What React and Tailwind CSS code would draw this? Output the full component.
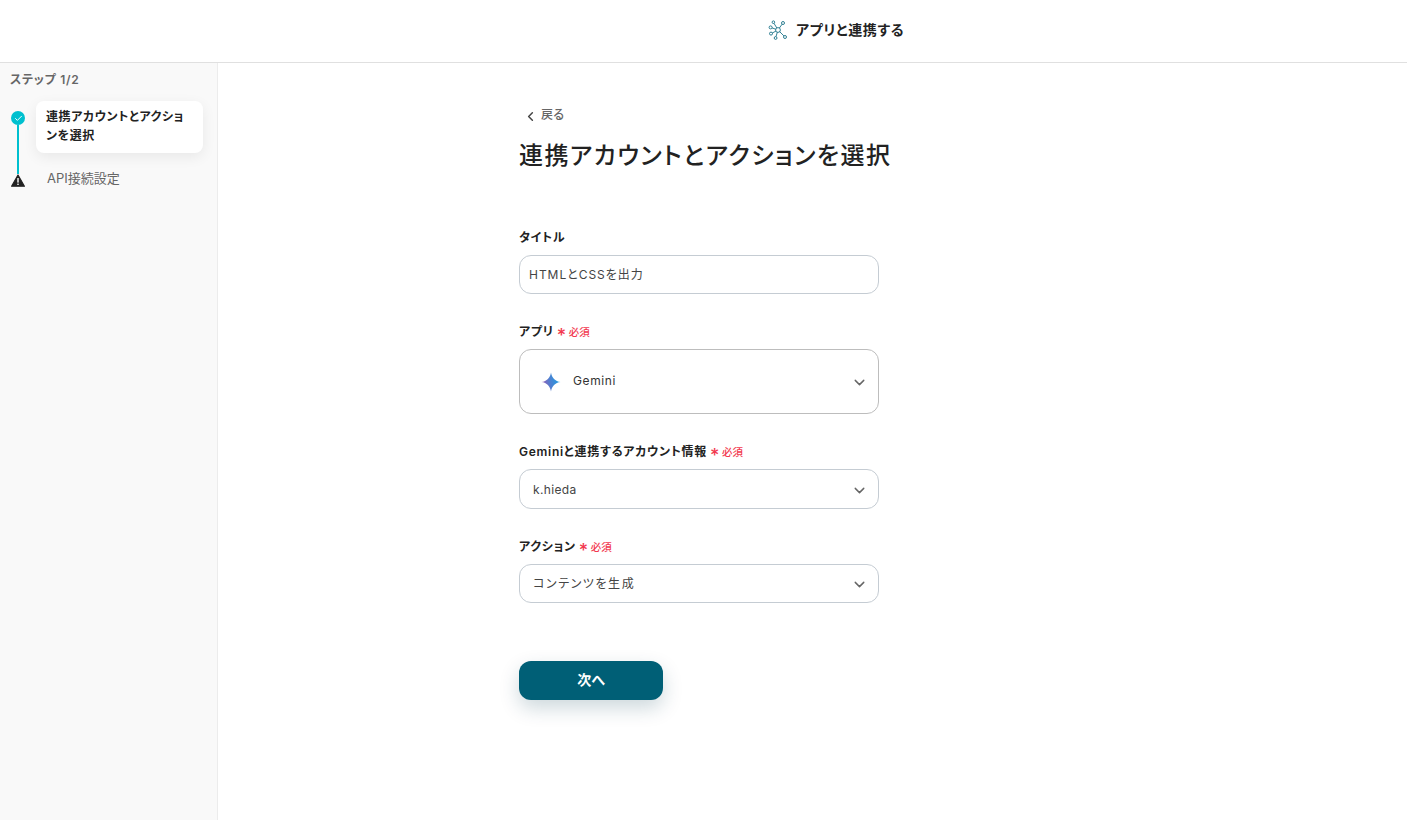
import { ChevronDown, ChevronLeft, Check } from "lucide-react";

const FONT = "font-['Inter','Noto_Sans_CJK_JP',sans-serif] [font-feature-settings:'palt']";

/* ICONS */

function LinkIcon() {
  return (
    <svg width="20" height="20" viewBox="0 0 20 20" fill="none" stroke="#00627a" strokeWidth="0.8">
      <circle cx="10" cy="10" r="2.4" />
      <circle cx="2.6" cy="7.4" r="1.5" />
      <circle cx="3" cy="13.6" r="1.5" />
      <circle cx="7.6" cy="18" r="1.4" />
      <circle cx="17" cy="17" r="1.5" />
      <circle cx="15" cy="3" r="1.5" />
      <circle cx="5.4" cy="2.2" r="1.3" />
      <path d="M7.7 9.2 4 7.9M7.9 11.1 4.3 13M9.3 12.3 8 16.6M11.7 11.7 15.9 15.9M11.4 8 14.1 4.2M8.8 7.9 6 3.4" />
    </svg>
  );
}

function GeminiIcon() {
  return (
    <svg width="20" height="20" viewBox="0 0 20 20">
      <defs>
        <linearGradient id="gem" x1="0" y1="0.6" x2="1" y2="0.4">
          <stop offset="0.1" stopColor="#8a62b8" />
          <stop offset="0.45" stopColor="#4f7fd0" />
          <stop offset="1" stopColor="#1ba1e3" />
        </linearGradient>
      </defs>
      <path d="M10 0.5C10.6 5.6 14.4 9.4 19.5 10C14.4 10.6 10.6 14.4 10 19.5C9.4 14.4 5.6 10.6 0.5 10C5.6 9.4 9.4 5.6 10 0.5Z" fill="url(#gem)" />
    </svg>
  );
}

function WarnIcon() {
  return (
    <svg width="14" height="13" viewBox="0 0 14 13" className="block">
      <path d="M7 1 13.4 12.2H0.6Z" fill="#222" stroke="#222" strokeWidth="1.2" strokeLinejoin="round" />
      <rect x="6.3" y="4" width="1.4" height="4.6" fill="#fff" />
      <rect x="6.3" y="9.6" width="1.4" height="1.4" fill="#fff" />
    </svg>
  );
}

/* FORM PARTS */

function Label({ children, required }) {
  return (
    <div className="flex items-center h-5 text-xs tracking-[0.06em] font-semibold text-[#222]">
      {children}
      {required && (
        <span className="flex items-center ml-[3px] pt-[1px] text-[10.5px] tracking-normal font-medium text-[#f2394f]">
          <span className="w-[9px] text-center text-[18px] font-medium leading-none mt-[6px] mr-[3px]">*</span>
          必須
        </span>
      )}
    </div>
  );
}

function Select({ children, height, border = "border-[#c5ccd3]" }) {
  return (
    <div className={`flex items-center justify-between border rounded-xl bg-white pr-[10px] ${border} ${height}`}>
      {children}
      <ChevronDown size={17} strokeWidth={2} className="text-[#666] mt-[2px]" />
    </div>
  );
}

export default function App() {
  return (
    <div className={`${FONT} h-[820px] flex flex-col bg-white overflow-hidden`}>

      {/* Header */}
      <header className="h-[63px] shrink-0 border-b border-[#e0e0e0] flex items-center pl-[768px] pb-[2px]">
        <LinkIcon />
        <span className="ml-2 text-sm tracking-[0.045em] font-semibold text-[#222]">アプリと連携する</span>
      </header>

      <div className="flex flex-1">

        {/* Sidebar */}
        <aside className="w-[218px] shrink-0 bg-[#f9f9f9] border-r border-[#ececec] pt-[8px]">
          <div className="pl-[10px] text-xs tracking-[0.06em] font-semibold text-[#666] leading-[18px]">ステップ 1/2</div>

          <div className="flex mt-[12px] pl-[11px]">
            <div className="flex flex-col items-center w-[14px] pt-[10px]">
              <div className="w-[14px] h-[14px] rounded-full bg-[#00c0cf] flex items-center justify-center shrink-0">
                <Check size={9} strokeWidth={2.5} className="text-white" />
              </div>
              <div className="w-[2px] h-[49px] bg-[#00c0cf]" />
              <WarnIcon />
            </div>
            <div className="ml-[11px]">
              <div className="w-[167px] h-[52px] rounded-lg bg-white shadow-[0_4px_14px_rgba(0,0,0,0.07)] px-[10px] pt-[6px] text-xs tracking-[0.05em] font-semibold leading-[19px] text-[#222]">
                連携アカウントとアクションを選択
              </div>
              <div className="mt-[16px] pl-[11px] text-[13px] leading-[18px] text-[#666]">API接続設定</div>
            </div>
          </div>
        </aside>

        {/* Main */}
        <main className="flex-1 pl-[301px] pt-[42px]">
          <div className="flex items-center h-[20px] pl-[4px] text-xs tracking-[0.03em] font-medium text-[#666]">
            <ChevronLeft size={15} strokeWidth={2.4} className="text-[#444] mt-[2px]" />
            <span className="ml-[3px]">戻る</span>
          </div>
          <h1 className="mt-[12px] text-2xl tracking-[0.06em] leading-[38px] font-medium text-[#222]">連携アカウントとアクションを選択</h1>

          <div className="w-[360px] mt-[53px]">
            <Label>タイトル</Label>
            <div className="mt-[7px] h-[39px] border border-[#c5ccd3] rounded-xl flex items-center px-[9px] text-xs tracking-[0.08em] text-[#444]">
              HTMLとCSSを出力
            </div>

            <div className="mt-[28px]">
              <Label required>アプリ</Label>
            </div>
            <div className="mt-[7px]">
              <Select height="h-[65px]" border="border-[#bdbdbd]">
                <div className="flex items-center pl-[21px]">
                  <GeminiIcon />
                  <span className="ml-[12px] pb-[2px] text-xs tracking-[0.05em] text-[#333]">Gemini</span>
                </div>
              </Select>
            </div>

            <div className="mt-[28px]">
              <Label required>Geminiと連携するアカウント情報</Label>
            </div>
            <div className="mt-[7px]">
              <Select height="h-[40px]">
                <span className="pl-[13px] pt-[1px] text-xs tracking-[0.03em] text-[#444]">k.hieda</span>
              </Select>
            </div>

            <div className="mt-[28px]">
              <Label required>アクション</Label>
            </div>
            <div className="mt-[7px]">
              <Select height="h-[39px]">
                <span className="pl-[13px] text-xs tracking-[0.13em] text-[#444]">コンテンツを生成</span>
              </Select>
            </div>

            <button className="mt-[58px] w-[144px] h-[39px] pb-[2px] rounded-xl bg-[#005f76] text-white text-sm font-semibold shadow-[0_8px_20px_rgba(0,60,80,0.2)]">
              次へ
            </button>
          </div>
        </main>
      </div>
    </div>
  );
}
